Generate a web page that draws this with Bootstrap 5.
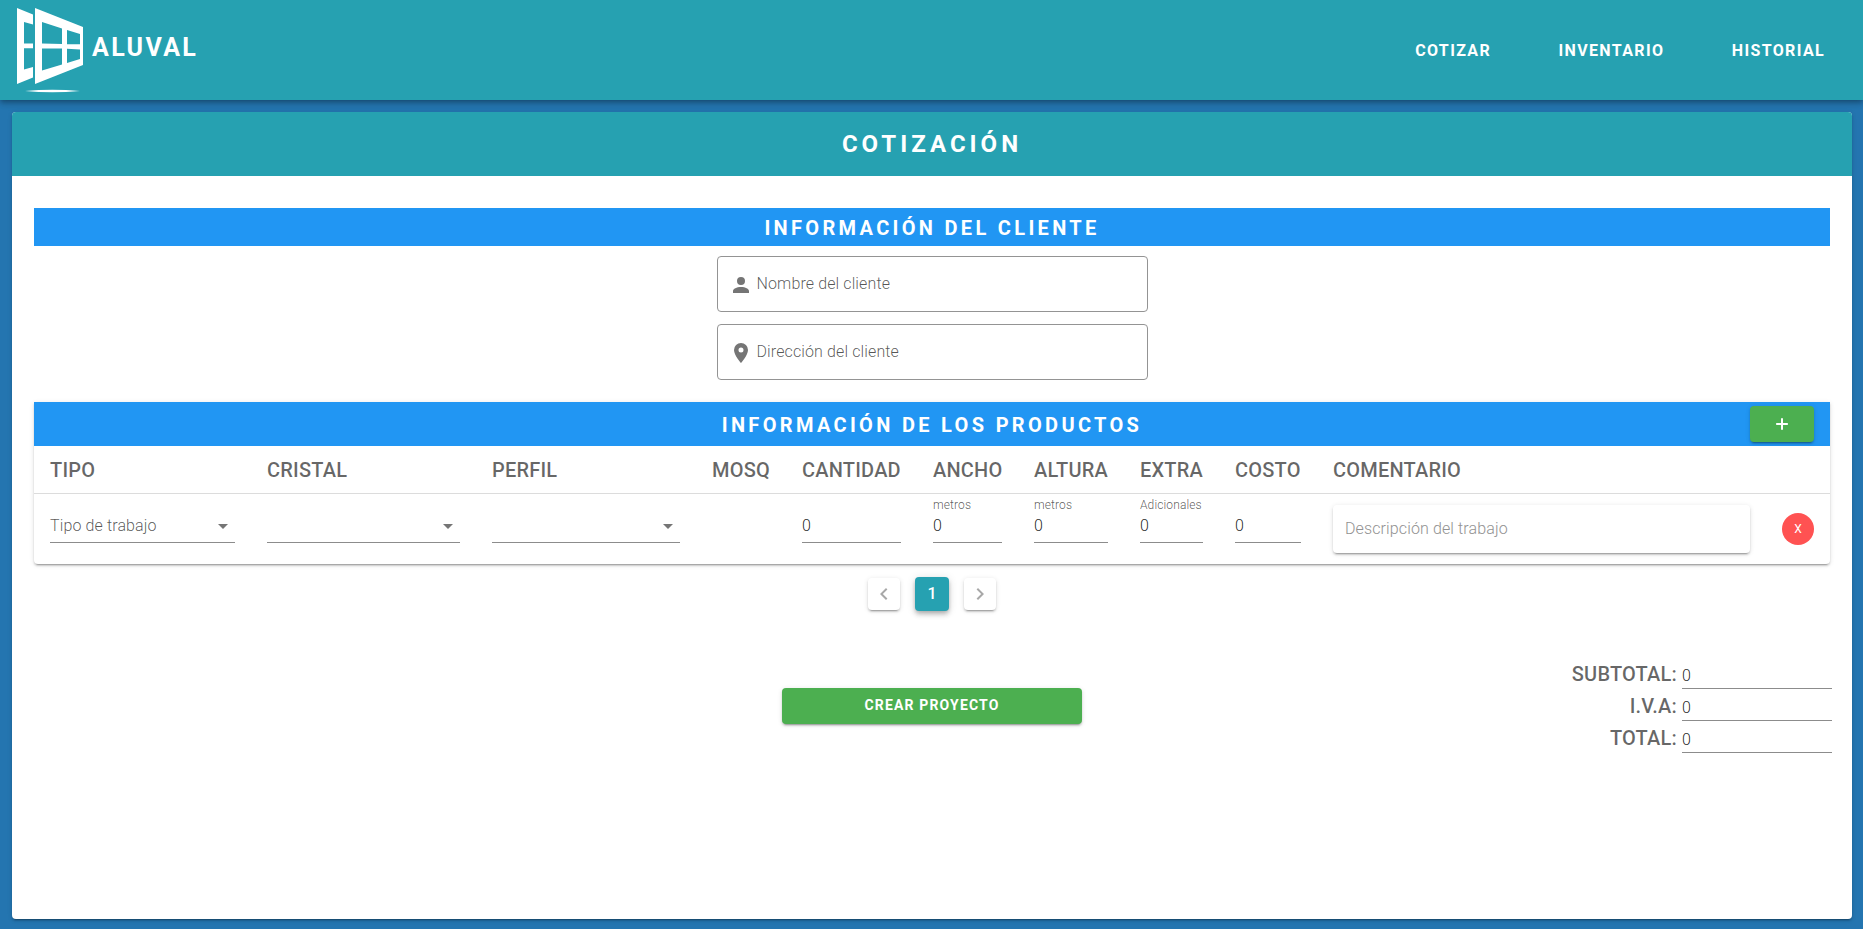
<!DOCTYPE html>
<html lang="es">
<head>
<meta charset="utf-8">
<meta name="viewport" content="width=device-width, initial-scale=1">
<title>Aluval - Cotización</title>
<link href="https://cdn.jsdelivr.net/npm/bootstrap@5.3.0/dist/css/bootstrap.min.css" rel="stylesheet">
<style>
  :root { --teal: #26a1b1; --azul: #2196f3; --verde: #4caf50; --gris: rgba(0,0,0,.6); --linea: #8c8c8c;
    --sombra: 0 3px 1px -2px rgba(0,0,0,.2), 0 2px 2px 0 rgba(0,0,0,.14), 0 1px 5px 0 rgba(0,0,0,.12); }
  body { font-family: Roboto, sans-serif; font-size: 16px; line-height: 24px; background: #2475b0; color: rgba(0,0,0,.87); height: 929px; overflow: hidden; }
  .topbar { height: 100px; background: var(--teal); padding: 0 38px 0 10px; position: relative;
    box-shadow: 0 2px 4px -1px rgba(0,0,0,.2), 0 4px 5px 0 rgba(0,0,0,.14), 0 1px 10px 0 rgba(0,0,0,.12); }
  .brand-name { font-size: 25px; font-weight: 700; letter-spacing: 2.35px; margin: -4px 0 0 1px; }
  .menu { gap: 67.5px; padding-top: 2px; }
  .menu a { font-weight: 700; letter-spacing: 1.35px; }
  .sheet { margin: 12px 11px 0 12px; height: 807px; border: 0; border-radius: 4px; box-shadow: var(--sombra); }
  .sheet-title { height: 64px; background: var(--teal); border-radius: 4px 4px 0 0; font-size: 24px; font-weight: 700; letter-spacing: 4px; }
  .sheet-body { padding: 32px 22px 0; }
  .band { background: var(--azul); font-size: 20px; font-weight: 700; letter-spacing: 3.32px; height: 38px; padding-top: 1px; }
  .band-lg { height: 44px; }
  .outlined { width: 431px; height: 56px; border: 1px solid #949494; border-radius: 4px; padding: 0 11px; }
  .outlined, .line, .comment, .tot-value { font-weight: 300; letter-spacing: .12px; }
  .outlined, .sel { color: rgba(0,0,0,.66); }
  .outlined svg { margin: 2px 4px 0 0; }
  .products { height: 162px; border-radius: 0 0 4px 4px; box-shadow: var(--sombra); }
  .prow { display: grid; grid-template-columns: 217px 225px 220px 90px 131px 101px 106px 95px 98px 449px 64px; }
  .prow > * { padding: 0 16px; white-space: nowrap; }
  .phead { height: 48px; border-bottom: 1px solid #dcdcdc; padding-top: 1px; align-items: center; font-size: 20px; font-weight: 500; letter-spacing: .2px; color: var(--gris); }
  .line { height: 38px; margin-top: 11px; border-bottom: 1px solid var(--linea); padding-top: 9px; }
  .line-labelled { padding-top: 0; }
  .line-label { font-size: 12px; line-height: 1px; height: 9px; color: rgba(0,0,0,.66); }
  .plus { width: 64px; height: 36px; border-radius: 4px; background: var(--verde); box-shadow: var(--sombra); right: 16px; top: 4px; }
  .comment { height: 48px; margin-top: 11px; border-radius: 4px; padding: 0 12px; color: #929292; box-shadow: var(--sombra); }
  .remove { width: 32px; height: 32px; background: #ff5252; font-size: 12px; font-weight: 400; margin-top: 19px; }
  .pages { height: 34px; margin-top: 13px; gap: 15px; }
  .pg { width: 32px; height: 32px; border-radius: 4px; box-shadow: var(--sombra); }
  .pg-on { width: 34px; height: 34px; background: var(--teal); font-weight: 500; padding-bottom: 1px;
    box-shadow: 0 2px 4px -1px rgba(0,0,0,.2), 0 4px 5px 0 rgba(0,0,0,.14), 0 1px 10px 0 rgba(0,0,0,.12); }
  .foot { display: grid; grid-template-columns: 1fr 300px 1fr; margin: 46px -2px 0 0; }
  .create { height: 36px; margin: 31px 1px 0 -1px; border-radius: 4px; background: var(--verde); box-shadow: var(--sombra); font-size: 14px; font-weight: 700; letter-spacing: 1.15px; padding-bottom: 1px !important; }
  .tot { height: 32px; }
  .tot-label { font-size: 20px; font-weight: 500; letter-spacing: .2px; color: var(--gris); margin-right: 5px; padding-top: 2px; }
  .tot-value { width: 150px; height: 32px; border-bottom: 1px solid var(--linea); padding-top: 7px; }
</style>
</head>
<body>
<nav class="topbar d-flex align-items-center justify-content-between text-white">
  <div class="d-flex align-items-center">
    <svg width="81" height="100" viewBox="10 0 81 100" fill="#fff" fill-rule="evenodd">
      <path d="M17 8 33 14.500V24.500L24 22V43.500H33V48.300H24V69.500L33 67V77.500L17 84Z"/>
      <path d="M35 8 83 27V65L35 84ZM42 22V43.500L62 44V28.500ZM67 30V44.300H80V34ZM42 48.500V70.500L62 64.500V48.500ZM67 48.800V63L80 59V49.500Z"/>
      <path d="M25 91Q52 88.500 80 91Q52 93.500 25 91Z"/>
    </svg>
    <span class="brand-name">ALUVAL</span>
  </div>
  <div class="menu d-flex">
    <a class="text-white text-decoration-none">COTIZAR</a>
    <a class="text-white text-decoration-none">INVENTARIO</a>
    <a class="text-white text-decoration-none">HISTORIAL</a>
  </div>
</nav>

<main class="card sheet">
  <div class="sheet-title d-flex align-items-center justify-content-center text-white">COTIZACIÓN</div>
  <div class="sheet-body">
    <div class="band d-flex align-items-center justify-content-center text-white">INFORMACIÓN DEL CLIENTE</div>
    <div class="outlined d-flex align-items-center mx-auto" style="margin-top:10px">
      <svg width="24" height="24" viewBox="0 0 24 24" fill="#757575"><path d="M12 4a4 4 0 0 1 4 4 4 4 0 0 1-4 4 4 4 0 0 1-4-4 4 4 0 0 1 4-4m0 10c4.420 0 8 1.790 8 4v2H4v-2c0-2.210 3.580-4 8-4z"/></svg>
      <span>Nombre del cliente</span>
    </div>
    <div class="outlined d-flex align-items-center mx-auto" style="margin-top:12px">
      <svg width="24" height="24" viewBox="0 0 24 24" fill="#757575"><path d="M12 11.500A2.500 2.500 0 0 1 9.500 9 2.500 2.500 0 0 1 12 6.500 2.500 2.500 0 0 1 14.500 9a2.500 2.500 0 0 1-2.500 2.500M12 2a7 7 0 0 0-7 7c0 5.250 7 13 7 13s7-7.750 7-13a7 7 0 0 0-7-7z"/></svg>
      <span>Dirección del cliente</span>
    </div>

    <section class="products" style="margin-top:22px">
      <div class="band band-lg position-relative d-flex align-items-center justify-content-center text-white">
        INFORMACIÓN DE LOS PRODUCTOS
        <button class="plus btn p-0 border-0 position-absolute d-flex align-items-center justify-content-center" aria-label="Agregar">
          <svg width="20" height="20" viewBox="0 0 24 24" fill="#fff"><path d="M19 13.200h-5.800V19h-2.400v-5.800H5v-2.400h5.800V5h2.400v5.800H19z"/></svg>
        </button>
      </div>
      <div class="prow phead">
        <div>TIPO</div><div>CRISTAL</div><div>PERFIL</div><div>MOSQ</div><div>CANTIDAD</div><div>ANCHO</div><div>ALTURA</div><div>EXTRA</div><div>COSTO</div><div>COMENTARIO</div><div></div>
      </div>
      <div class="prow">
        <div><div class="line sel d-flex justify-content-between"><span>Tipo de trabajo</span><svg width="24" height="24" viewBox="0 0 24 24" fill="#757575"><path d="M7 10l5 5 5-5z"/></svg></div></div>
        <div><div class="line d-flex justify-content-end"><svg width="24" height="24" viewBox="0 0 24 24" fill="#757575"><path d="M7 10l5 5 5-5z"/></svg></div></div>
        <div><div class="line d-flex justify-content-end"><svg width="24" height="24" viewBox="0 0 24 24" fill="#757575"><path d="M7 10l5 5 5-5z"/></svg></div></div>
        <div></div>
        <div><div class="line">0</div></div>
        <div><div class="line line-labelled"><div class="line-label">metros</div>0</div></div>
        <div><div class="line line-labelled"><div class="line-label">metros</div>0</div></div>
        <div><div class="line line-labelled"><div class="line-label">Adicionales</div>0</div></div>
        <div><div class="line">0</div></div>
        <div><div class="comment d-flex align-items-center">Descripción del trabajo</div></div>
        <div><button class="remove btn rounded-circle p-0 border-0 text-white d-flex align-items-center justify-content-center">X</button></div>
      </div>
    </section>

    <div class="pages d-flex align-items-center justify-content-center">
      <span class="pg d-flex align-items-center justify-content-center"><svg width="24" height="24" viewBox="0 0 24 24" fill="#a8a8a8"><path d="M15.410 16.580 10.830 12l4.580-4.590L14 6l-6 6 6 6z"/></svg></span>
      <span class="pg pg-on text-white d-flex align-items-center justify-content-center">1</span>
      <span class="pg d-flex align-items-center justify-content-center"><svg width="24" height="24" viewBox="0 0 24 24" fill="#a8a8a8"><path d="M8.590 16.580 13.170 12 8.590 7.410 10 6l6 6-6 6z"/></svg></span>
    </div>

    <div class="foot">
      <div></div>
      <button class="create btn p-0 border-0 text-white">CREAR PROYECTO</button>
      <div>
        <div class="tot d-flex align-items-center justify-content-end"><span class="tot-label">SUBTOTAL:</span><span class="tot-value">0</span></div>
        <div class="tot d-flex align-items-center justify-content-end"><span class="tot-label">I.V.A:</span><span class="tot-value">0</span></div>
        <div class="tot d-flex align-items-center justify-content-end"><span class="tot-label">TOTAL:</span><span class="tot-value">0</span></div>
      </div>
    </div>
  </div>
</main>
<script src="https://cdn.jsdelivr.net/npm/bootstrap@5.3.0/dist/js/bootstrap.bundle.min.js"></script>
</body>
</html>
